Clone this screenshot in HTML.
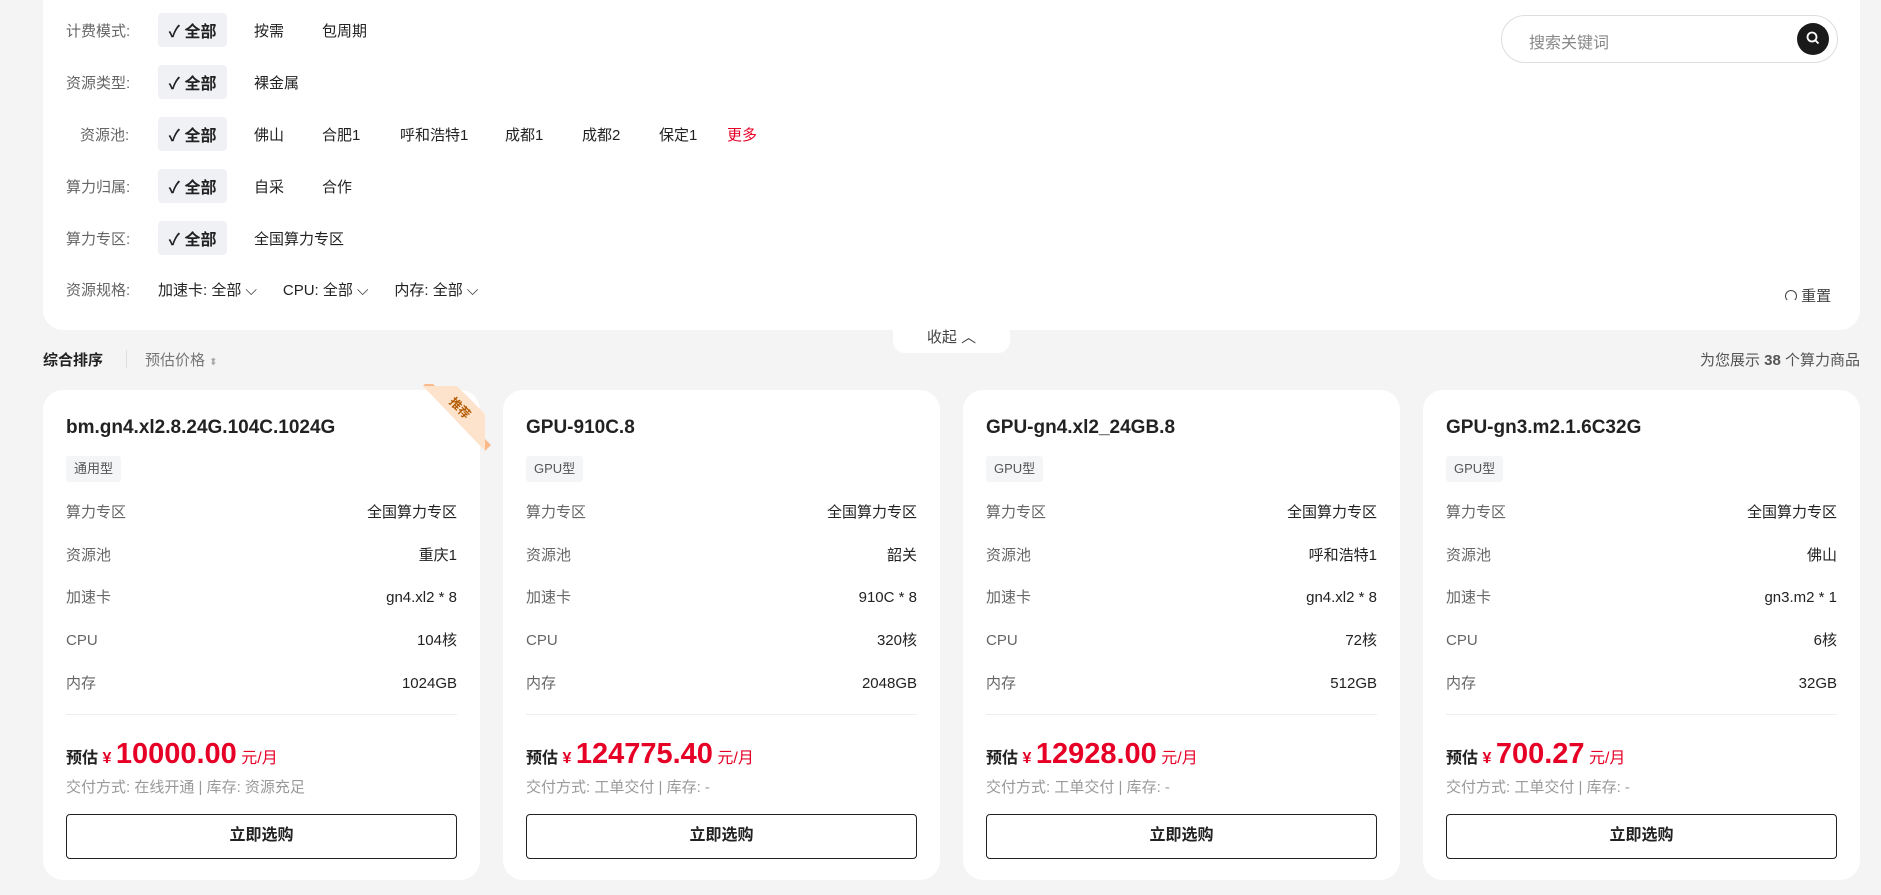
<!DOCTYPE html>
<html><head><meta charset="utf-8">
<style>
*{box-sizing:border-box;margin:0;padding:0}
body{width:1881px;height:895px;background:#f4f4f4;font-family:"Liberation Sans","Noto Sans CJK SC",sans-serif;color:#222;position:relative;overflow:hidden;white-space:nowrap}
.panel{position:absolute;left:43px;top:-20px;width:1817px;height:350px;background:#fff;border-radius:20px}
.row{position:absolute;left:66px;height:34px;display:flex;align-items:center;font-size:15px}
.lab{color:#666;width:92px}
.chip{background:#f0f1f5;border-radius:4px;height:34px;width:69px;display:flex;align-items:center;justify-content:center;font-weight:bold;font-size:16px}
.opt{position:absolute;font-size:15px;color:#222;top:9px;line-height:20px}
.search{position:absolute;left:1501px;top:15px;width:337px;height:48px;border:1px solid #ddd;border-radius:24px;background:#fff}
.search span{position:absolute;left:27px;top:13px;color:#888;font-size:16px}
.sbtn{position:absolute;right:8px;top:7px;width:32px;height:32px;border-radius:50%;background:#1a1a1a}
.tab{position:absolute;left:893px;top:326px;width:117px;height:27px;background:#fff;border-radius:0 0 12px 12px;font-size:15px;color:#444;text-align:center;line-height:24px}
.card{position:absolute;top:390px;width:437px;height:490px;background:#fff;border-radius:20px}
.card h3{position:absolute;left:23px;top:27px;font-size:19px;font-weight:bold}
.tag{position:absolute;left:23px;top:66px;height:26px;padding:0 8px;background:#f4f5f7;border-radius:3px;font-size:13px;color:#555;line-height:26px}
.kv{position:absolute;left:23px;right:23px;font-size:15px;height:22px;line-height:22px;display:flex;justify-content:space-between;align-items:center}
.kv span{display:block;height:22px;line-height:22px}
.kv span:first-child{color:#666}
.div{position:absolute;left:23px;right:23px;top:324px;height:1px;background:#eee}
.price{position:absolute;left:23px;top:348px}
.price b{font-size:16px}
.price i{font-style:normal;color:#e60026;font-weight:bold;font-size:16px}
.price em{font-style:normal;color:#e60026;font-weight:bold;font-size:29px}
.price small{color:#e60026;font-size:16px}
.del{position:absolute;left:23px;top:386px;font-size:15px;color:#999}
.btn{position:absolute;left:23px;right:23px;top:424px;height:45px;border:1.5px solid #222;border-radius:4px;text-align:center;line-height:42px;font-weight:bold;font-size:16px}
</style></head><body>
<div class="panel"></div>
<div class="row" style="top:13px"><span class="lab">计费模式:</span><span class="chip">✓ 全部</span><span class="opt" style="left:188px">按需</span><span class="opt" style="left:256px">包周期</span></div>
<div class="row" style="top:65px"><span class="lab">资源类型:</span><span class="chip">✓ 全部</span><span class="opt" style="left:188px">裸金属</span></div>
<div class="row" style="top:117px"><span class="lab" style="padding-left:14px">资源池:</span><span class="chip">✓ 全部</span><span class="opt" style="left:188px">佛山</span><span class="opt" style="left:256px">合肥1</span><span class="opt" style="left:334px">呼和浩特1</span><span class="opt" style="left:439px">成都1</span><span class="opt" style="left:516px">成都2</span><span class="opt" style="left:593px">保定1</span><span class="opt" style="left:661px;color:#e60026">更多</span></div>
<div class="row" style="top:169px"><span class="lab">算力归属:</span><span class="chip">✓ 全部</span><span class="opt" style="left:188px">自采</span><span class="opt" style="left:256px">合作</span></div>
<div class="row" style="top:221px"><span class="lab">算力专区:</span><span class="chip">✓ 全部</span><span class="opt" style="left:188px">全国算力专区</span></div>
<div class="row" style="top:272px"><span class="lab">资源规格:</span><span>加速卡: 全部 ⌵</span><span style="margin-left:26px">CPU: 全部 ⌵</span><span style="margin-left:26px">内存: 全部 ⌵</span></div>
<div class="search"><span>搜索关键词</span><div class="sbtn"><svg width="32" height="32"><circle cx="15" cy="14" r="4.5" fill="none" stroke="#fff" stroke-width="1.8"/><line x1="18.3" y1="17.3" x2="21.5" y2="20.5" stroke="#fff" stroke-width="1.8"/></svg></div></div>
<div style="position:absolute;left:1785px;top:285px;font-size:15px;color:#444"><span style="display:inline-block;width:12px;height:12px;border:1.5px solid #444;border-radius:50%;border-bottom-color:transparent;vertical-align:-1px"></span> 重置</div>
<div class="tab">收起 ︿</div>
<div style="position:absolute;left:43px;top:349px;font-size:15px;font-weight:bold">综合排序</div>
<div style="position:absolute;left:126px;top:350px;width:1px;height:18px;background:#ddd"></div>
<div style="position:absolute;left:145px;top:349px;font-size:15px;color:#777">预估价格 <span style="font-size:10px;color:#aaa">⬍</span></div>
<div style="position:absolute;right:21px;top:349px;font-size:15px;color:#555">为您展示 <b>38</b> 个算力商品</div>

<div class="card" style="left:43px">
<svg style="position:absolute;left:370px;top:-6px" width="80" height="72"><polygon points="10,2 44,2 72,30 72,67" fill="#fde3cc"/><polygon points="10,2 16,-4 22,2" fill="#f9b98a"/><polygon points="72,55 78,61 72,67" fill="#f9b98a"/><text x="0" y="0" transform="translate(44,27) rotate(45)" font-size="12" font-weight="bold" fill="#b35a00" text-anchor="middle" font-family="Liberation Sans,Noto Sans CJK SC,sans-serif">推荐</text></svg>
<h3>bm.gn4.xl2.8.24G.104C.1024G</h3><div class="tag">通用型</div>
<div class="kv" style="top:112px"><span>算力专区</span><span>全国算力专区</span></div>
<div class="kv" style="top:155px"><span>资源池</span><span>重庆1</span></div>
<div class="kv" style="top:197px"><span>加速卡</span><span>gn4.xl2 * 8</span></div>
<div class="kv" style="top:240px"><span>CPU</span><span>104核</span></div>
<div class="kv" style="top:283px"><span>内存</span><span>1024GB</span></div>
<div class="div"></div>
<div class="price"><b>预估</b> <i>¥</i> <em>10000.00</em> <small>元/月</small></div>
<div class="del">交付方式: 在线开通 | 库存: 资源充足</div>
<div class="btn">立即选购</div></div>

<div class="card" style="left:503px">
<h3>GPU-910C.8</h3><div class="tag">GPU型</div>
<div class="kv" style="top:112px"><span>算力专区</span><span>全国算力专区</span></div>
<div class="kv" style="top:155px"><span>资源池</span><span>韶关</span></div>
<div class="kv" style="top:197px"><span>加速卡</span><span>910C * 8</span></div>
<div class="kv" style="top:240px"><span>CPU</span><span>320核</span></div>
<div class="kv" style="top:283px"><span>内存</span><span>2048GB</span></div>
<div class="div"></div>
<div class="price"><b>预估</b> <i>¥</i> <em>124775.40</em> <small>元/月</small></div>
<div class="del">交付方式: 工单交付 | 库存: -</div>
<div class="btn">立即选购</div></div>

<div class="card" style="left:963px">
<h3>GPU-gn4.xl2_24GB.8</h3><div class="tag">GPU型</div>
<div class="kv" style="top:112px"><span>算力专区</span><span>全国算力专区</span></div>
<div class="kv" style="top:155px"><span>资源池</span><span>呼和浩特1</span></div>
<div class="kv" style="top:197px"><span>加速卡</span><span>gn4.xl2 * 8</span></div>
<div class="kv" style="top:240px"><span>CPU</span><span>72核</span></div>
<div class="kv" style="top:283px"><span>内存</span><span>512GB</span></div>
<div class="div"></div>
<div class="price"><b>预估</b> <i>¥</i> <em>12928.00</em> <small>元/月</small></div>
<div class="del">交付方式: 工单交付 | 库存: -</div>
<div class="btn">立即选购</div></div>

<div class="card" style="left:1423px">
<h3>GPU-gn3.m2.1.6C32G</h3><div class="tag">GPU型</div>
<div class="kv" style="top:112px"><span>算力专区</span><span>全国算力专区</span></div>
<div class="kv" style="top:155px"><span>资源池</span><span>佛山</span></div>
<div class="kv" style="top:197px"><span>加速卡</span><span>gn3.m2 * 1</span></div>
<div class="kv" style="top:240px"><span>CPU</span><span>6核</span></div>
<div class="kv" style="top:283px"><span>内存</span><span>32GB</span></div>
<div class="div"></div>
<div class="price"><b>预估</b> <i>¥</i> <em>700.27</em> <small>元/月</small></div>
<div class="del">交付方式: 工单交付 | 库存: -</div>
<div class="btn">立即选购</div></div>
</body></html>
